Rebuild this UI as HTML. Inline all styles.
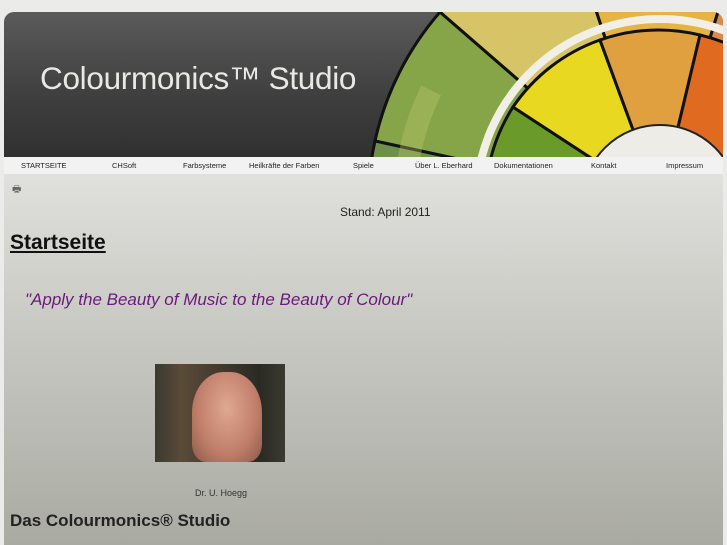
<!DOCTYPE html>
<html><head><meta charset="utf-8"><style>
body{margin:0;width:727px;height:545px;overflow:hidden;background:#ebebe9;font-family:"Liberation Sans",sans-serif;position:relative}
#hdr{position:absolute;left:4px;top:12px;width:719px;height:145px;border-radius:10px 10px 0 0;overflow:hidden;background:linear-gradient(#5a5a5a,#3e3e3e 60%,#303030)}
#hdr h1{position:absolute;left:36px;top:48px;margin:0;font-weight:normal;font-size:31.5px;color:#e8e8e4;letter-spacing:-0.3px}
#nav{position:absolute;left:4px;top:157px;width:719px;height:17px;background:#f2f2f2;font-size:7.5px;color:#222}
#nav span{position:absolute;top:4px}
#main{position:absolute;left:4px;top:174px;width:719px;height:371px;background:linear-gradient(#e0e0dc,#a9aaa2)}
.t{position:absolute;margin:0}
</style></head><body>
<div id="hdr">
<svg width="719" height="145" style="position:absolute;left:0;top:0">
<g transform="translate(656,191)" stroke="#111" stroke-width="3">
<path d="M0 0 L-285 -62 A292 292 0 0 1 -220 -191 Z" fill="#86a448"/>
<path d="M0 0 L-220 -191 A292 292 0 0 1 -92 -277 Z" fill="#d6c466"/>
<path d="M0 0 L-92 -277 A292 292 0 0 1 84 -277 Z" fill="#e6b444"/>
<path d="M0 0 L84 -277 A292 292 0 0 1 292 0 Z" fill="#d98a50"/>
<path d="M0 0 L-292 0 A292 292 0 0 1 -285 -62 Z" fill="#6f9048"/>
<circle r="255" fill="none" stroke="#c4cc70" stroke-width="22" opacity=".35" stroke-dasharray="170 2000" transform="rotate(-192)"/>
<circle r="184" fill="none" stroke="#f2efe6" stroke-width="8"/>
<path d="M0 0 L-175 0 L-171 -37 A175 175 0 0 1 -147 -96 Z" fill="#6a9a2a"/>
<path d="M0 0 L-147 -96 A175 175 0 0 1 -60 -163 Z" fill="#e8d820"/>
<path d="M0 0 L-60 -163 A175 175 0 0 1 40 -168 Z" fill="#e0a040"/>
<path d="M0 0 L40 -168 A175 175 0 0 1 175 0 Z" fill="#e06a20"/>
<circle r="78" fill="#eeece6" stroke="#222" stroke-width="2"/>
</g></svg>
<h1>Colourmonics™ Studio</h1>
</div>
<div id="nav">
<span style="left:17px">STARTSEITE</span><span style="left:108px">CHSoft</span><span style="left:179px">Farbsysteme</span><span style="left:245px">Heilkräfte der Farben</span><span style="left:349px">Spiele</span><span style="left:411px">Über L. Eberhard</span><span style="left:490px">Dokumentationen</span><span style="left:587px">Kontakt</span><span style="left:662px">Impressum</span>
</div>
<div id="main">
<div class="t" style="left:8px;top:8px;font-size:10px;color:#666">🖶</div>
<div class="t" style="left:336px;top:31px;font-size:12px;color:#222">Stand: April 2011</div>
<div class="t" style="left:6px;top:57px;font-size:21px;font-weight:bold;text-decoration:underline;color:#111">Startseite</div>
<div class="t" style="left:21px;top:116px;font-size:17px;font-style:italic;color:#6a1a7a">"Apply the Beauty of Music to the Beauty of Colour"</div>
<div class="t" style="left:151px;top:190px;width:130px;height:98px;background:linear-gradient(90deg,#3a3a30,#5a4a38 20%,#2a2a24 80%,#3a3a30)"></div>
<div class="t" style="left:188px;top:198px;width:70px;height:90px;border-radius:45% 45% 20% 20%;background:radial-gradient(ellipse at 50% 40%,#e0a890,#c07e6a 60%,#8a5a48)"></div>
<div class="t" style="left:191px;top:314px;font-size:9px;color:#333">Dr. U. Hoegg</div>
<div class="t" style="left:6px;top:337px;font-size:17px;font-weight:bold;color:#222">Das Colourmonics® Studio</div>
</div>
</body></html>
